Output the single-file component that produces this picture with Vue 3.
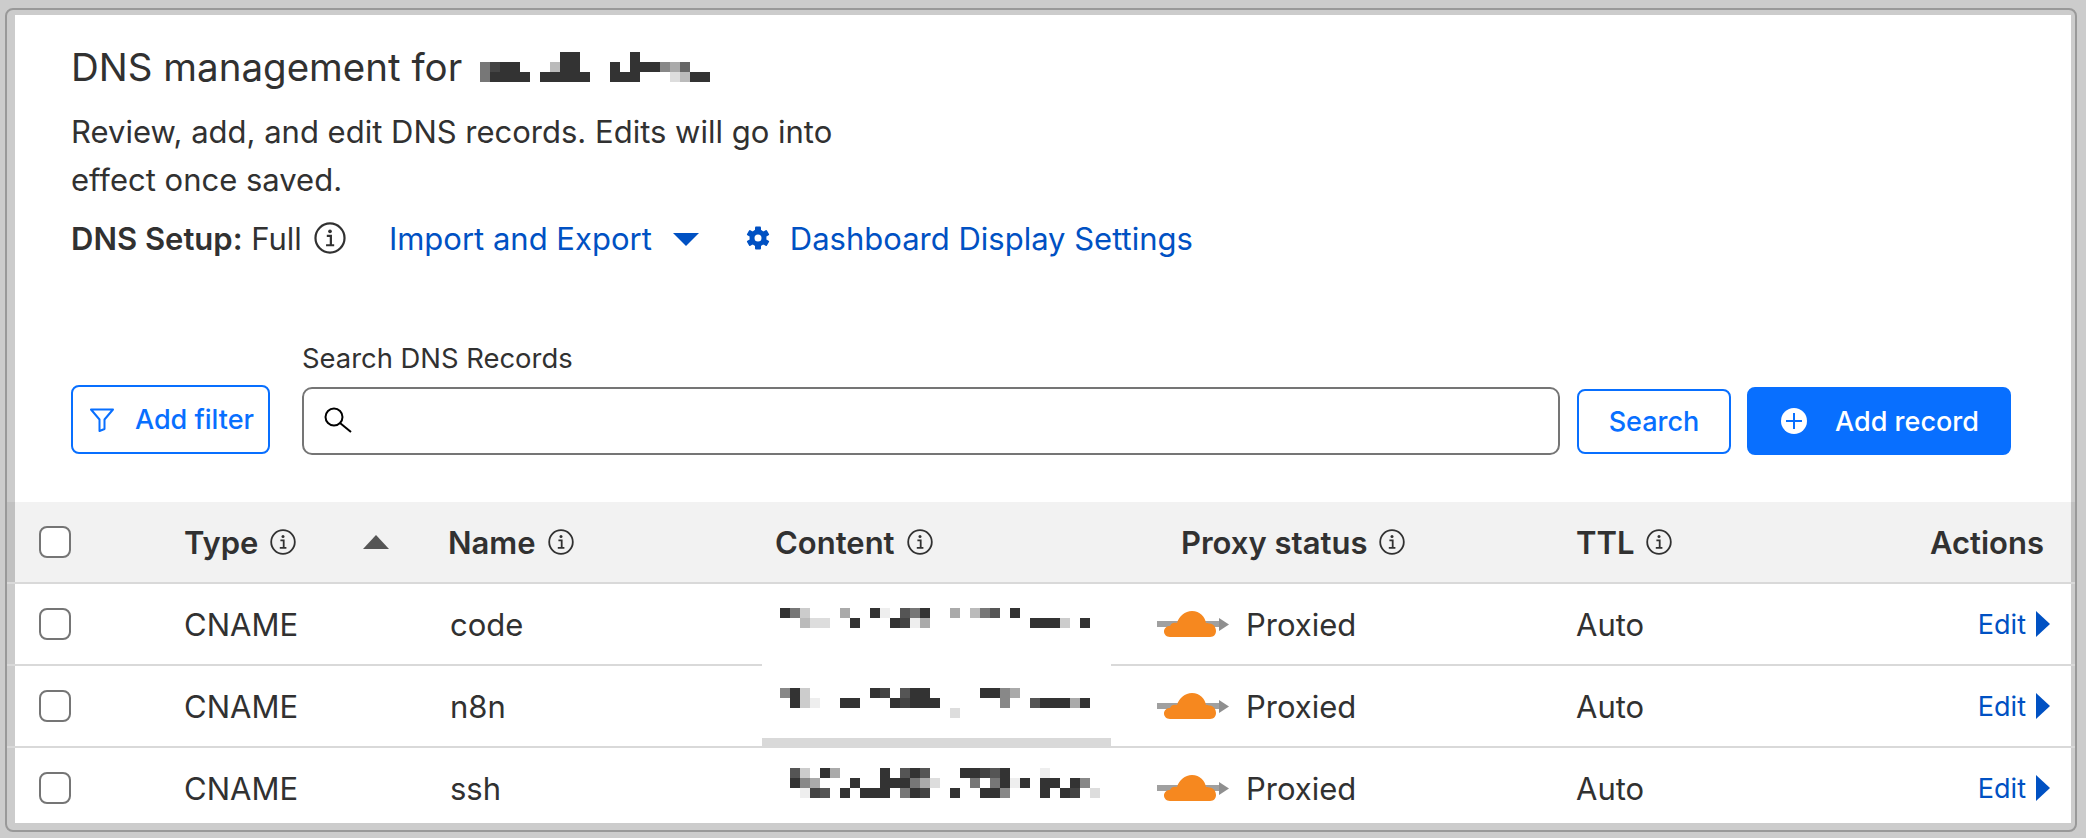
<script setup>
const titleBlur = ['........33.....3', '7433...b33...3.3338a6', '73333.33333..333...db33']

const rows = [
  { type: 'CNAME', name: 'code', offset: 24, blur: ['37c...a.f3e.573..a.b75.3', '.fbdd.f3...34ea..........333cf3'] },
  {
    type: 'CNAME',
    name: 'n8n',
    offset: 22,
    patch: true,
    blur: ['83c..f...34.533.....338a', '.3ce..33..f34333......8..5333a3', '.................d'],
  },
  {
    type: 'CNAME',
    name: 'ssh',
    offset: 20,
    blur: ['.5c.3a....3.535...33453...e', 'f38a...3..3337ad...7.73e3.33.38', '..e45.3.333f734..3..338...3.34.d'],
  },
]

const columns = [
  { label: 'Type', info: true, sort: true },
  { label: 'Name', info: true },
  { label: 'Content', info: true },
  { label: 'Proxy status', info: true, indent: true },
  { label: 'TTL', info: true },
]

// each character is one grey block of the blurred text, "." leaves a gap
function blocks(lines) {
  const out = []
  lines.forEach((line, y) => {
    ;[...line].forEach((shade, x) => {
      if (shade !== '.') out.push({ x: x * 10, y: y * 10, fill: '#' + shade + shade + shade })
    })
  })
  return out
}

function blurWidth(lines) {
  return Math.max(...lines.map((l) => l.length)) * 10
}
</script>

<template>
  <div class="frame">
    <main class="card">
      <header class="intro">
        <h1 class="title">
          <span>DNS management for</span>
          <svg class="blur" :width="blurWidth(titleBlur)" height="30" shape-rendering="crispEdges">
            <rect v-for="(b, i) in blocks(titleBlur)" :key="i" :x="b.x" :y="b.y" width="10" height="10" :fill="b.fill" />
          </svg>
        </h1>
        <p class="lead">Review, add, and edit DNS records. Edits will go into<br />effect once saved.</p>
        <div class="setup">
          <span class="setup-label"><b>DNS Setup:</b> Full</span>
          <svg class="info info-lg" viewBox="0 0 26 26">
            <circle cx="13" cy="13" r="11.8" />
            <circle class="dot" cx="13" cy="7.6" r="1.5" />
            <path d="M10.4 11.3h3.3v7.4M9.8 18.9h6.6" />
          </svg>
          <a class="link import">Import and Export</a>
          <svg class="caret" width="26" height="13" viewBox="0 0 26 13"><path d="M0 0h26L13 13z" /></svg>
          <svg class="gear" width="24" height="24" viewBox="0 0 24 24">
            <rect v-for="a in [0, 60, 120, 180, 240, 300]" :key="a" x="9" y="0.5" width="6" height="6" rx="1" :transform="`rotate(${a} 12 12)`" />
            <path fill-rule="evenodd" d="M12 3.5a8.5 8.5 0 1 0 0 17 8.5 8.5 0 0 0 0-17zm0 5a3.5 3.5 0 1 1 0 7 3.5 3.5 0 0 1 0-7z" />
          </svg>
          <a class="link">Dashboard Display Settings</a>
        </div>
      </header>

      <section class="toolbar">
        <button class="btn btn-filter">
          <svg width="24" height="24" viewBox="0 0 24 24" fill="none" stroke="currentColor" stroke-width="2">
            <path d="M1 1.5h22l-8.5 10v9.5l-5 2v-11.500z" stroke-linejoin="round" />
          </svg>
          Add filter
        </button>
        <div class="search">
          <label class="search-label">Search DNS Records</label>
          <div class="search-box">
            <svg width="28" height="28" viewBox="0 0 28 28" fill="none" stroke="#000" stroke-width="2">
              <circle cx="10" cy="10" r="8.500" />
              <path d="M16 16l11 9" />
            </svg>
            <input class="search-input" type="text" />
          </div>
        </div>
        <button class="btn btn-search">Search</button>
        <button class="btn btn-add">
          <svg width="26" height="26" viewBox="0 0 26 26">
            <circle cx="13" cy="13" r="13" fill="#fff" />
            <path d="M13 5v16M5 13h16" stroke="#086fff" stroke-width="2" />
          </svg>
          Add record
        </button>
      </section>

      <section class="table">
        <div class="row head">
          <div class="cell check"><span class="box"></span></div>
          <div v-for="col in columns" :key="col.label" class="cell" :class="{ indent: col.indent }">
            <span>{{ col.label }}</span>
            <svg class="info" viewBox="0 0 26 26">
              <circle cx="13" cy="13" r="11.800" />
              <circle class="dot" cx="13" cy="7.600" r="1.500" />
              <path d="M10.400 11.300h3.300v7.400M9.800 18.900h6.600" />
            </svg>
            <svg v-if="col.sort" class="sort" width="26" height="14" viewBox="0 0 26 14"><path d="M13 0l13 14H0z" /></svg>
          </div>
          <div class="cell actions">Actions</div>
        </div>
        <div v-for="row in rows" :key="row.name" class="row">
          <div class="cell check"><span class="box"></span></div>
          <div class="cell">{{ row.type }}</div>
          <div class="cell name">{{ row.name }}</div>
          <div class="cell content">
            <div v-if="row.patch" class="patch"></div>
            <svg
              class="blur-cell"
              :style="{ marginTop: row.offset + 'px' }"
              :width="blurWidth(row.blur)"
              :height="row.blur.length * 10"
              shape-rendering="crispEdges"
            >
              <rect v-for="(b, i) in blocks(row.blur)" :key="i" :x="b.x" :y="b.y" width="10" height="10" :fill="b.fill" />
            </svg>
          </div>
          <div class="cell proxy">
            <svg width="72" height="30" viewBox="0 0 72 30">
              <rect x="0" y="12" width="62" height="6" fill="#a0a0a0" />
              <path d="M62 9l10 6.500-10 6.500z" fill="#8f8f8f" />
              <path
                fill="#f6881f"
                d="M13 28C9 28 7 25 7 22.500C7 19 10 17 13 17C14 14 17 13 20 14C22 7 28 2 35 2C43 2 48 8 49 14C50 14 51 14 52 14.500C56 14 59 18 59 22C59 25 57 28 53 28Z"
              />
            </svg>
            <span>Proxied</span>
          </div>
          <div class="cell">Auto</div>
          <div class="cell actions edit-cell">
            <a class="edit">Edit</a>
            <svg width="14" height="26" viewBox="0 0 14 26"><path d="M0 0l14 13L0 26z" fill="#0051c3" /></svg>
          </div>
        </div>
      </section>
    </main>
  </div>
</template>

<style>
html,
body {
  margin: 0;
  background: #ccc;
}
</style>

<style scoped>
.frame {
  box-sizing: border-box;
  width: 2072px;
  height: 824px;
  margin: 8px 0 0 5px;
  padding: 5px 4px 5px 8px;
  border: 2px solid #999;
  border-radius: 8px;
  font-family: Inter, "Liberation Sans", sans-serif;
  font-size: 31px;
  color: #313131;
}

.card {
  height: 808px;
  background: #fff;
}

.intro {
  padding: 28px 56px 0;
}

.title {
  display: flex;
  align-items: center;
  gap: 18px;
  margin: 0;
  height: 48px;
  font-size: 38.5px;
  font-weight: 400;
}

.lead {
  margin: 17px 0 0;
  line-height: 48px;
}

.setup {
  display: flex;
  align-items: center;
  height: 48px;
  margin-top: 10px;
}

.setup-label b {
  font-weight: 600;
}

.info {
  flex: none;
  width: 26px;
  height: 26px;
  margin-left: 12px;
  fill: none;
  stroke: #313131;
  stroke-width: 1.800;
}

.info .dot {
  fill: #313131;
  stroke: none;
}

.info-lg {
  width: 32px;
  height: 32px;
}

.link {
  color: #0051c3;
}

.import {
  margin-left: 43px;
}

.caret {
  margin: 2px 0 0 21px;
  fill: #0051c3;
}

.gear {
  margin: 0 20px 0 47px;
  fill: #0051c3;
}

.toolbar {
  display: flex;
  align-items: flex-end;
  padding: 0 60px 0 56px;
  margin-top: 76px;
}

.btn {
  display: flex;
  align-items: center;
  justify-content: center;
  box-sizing: border-box;
  border: 2px solid #086fff;
  border-radius: 8px;
  background: #fff;
  color: #086fff;
  font: 500 27px Inter, "Liberation Sans", sans-serif;
  padding: 0;
}

.btn-filter {
  flex: none;
  width: 199px;
  height: 69px;
  gap: 21px;
  padding-left: 3px;
  margin: 0 32px 1px 0;
}

.search {
  flex: 1;
}

.search-label {
  display: block;
  font-size: 27.4px;
  line-height: 40px;
  margin-bottom: 9px;
}

.search-box {
  display: flex;
  align-items: center;
  box-sizing: border-box;
  height: 68px;
  padding-left: 20px;
  border: 2px solid #757575;
  border-radius: 10px;
}

.search-input {
  flex: 1;
  min-width: 0;
  border: 0;
  outline: 0;
  background: none;
}

.btn-search {
  flex: none;
  width: 154px;
  height: 65px;
  margin: 0 16px 1px 17px;
}

.btn-add {
  flex: none;
  width: 264px;
  height: 68px;
  gap: 28px;
  padding-left: 2px;
  background: #086fff;
  color: #fff;
}

.table {
  margin: 47px -4px 0 -8px;
}

.row {
  display: grid;
  grid-template-columns: 177px 264px 327px 382px 419px 200px 299px;
  grid-template-rows: 80px;
  height: 80px;
  border-bottom: 2px solid #d9d9d9;
}

.row:last-child {
  height: 75px;
  border-bottom: 0;
}

.head {
  background: rgba(0, 0, 0, 0.05);
  font-weight: 600;
}

.cell {
  display: flex;
  align-items: center;
  position: relative;
}

.check {
  padding-left: 32px;
}

.box {
  box-sizing: border-box;
  width: 32px;
  height: 32px;
  border: 2px solid #757575;
  border-radius: 8px;
  background: #fff;
}

.indent {
  padding-left: 24px;
}

.sort {
  margin-left: 67px;
  fill: #555;
}

.name {
  padding-left: 2px;
}

.content {
  align-items: flex-start;
  padding-left: 5px;
}

.patch {
  position: absolute;
  left: -13px;
  top: -2px;
  width: 349px;
  height: 74px;
  background: #fff;
  border-bottom: 8px solid #d9d9d9;
}

.blur-cell {
  position: relative;
}

.proxy {
  gap: 17px;
}

.actions {
  justify-content: flex-end;
  padding-right: 31px;
}

.edit-cell {
  padding-right: 25px;
}

.edit {
  margin-right: 10px;
  font-size: 27px;
  color: #0051c3;
}
</style>
